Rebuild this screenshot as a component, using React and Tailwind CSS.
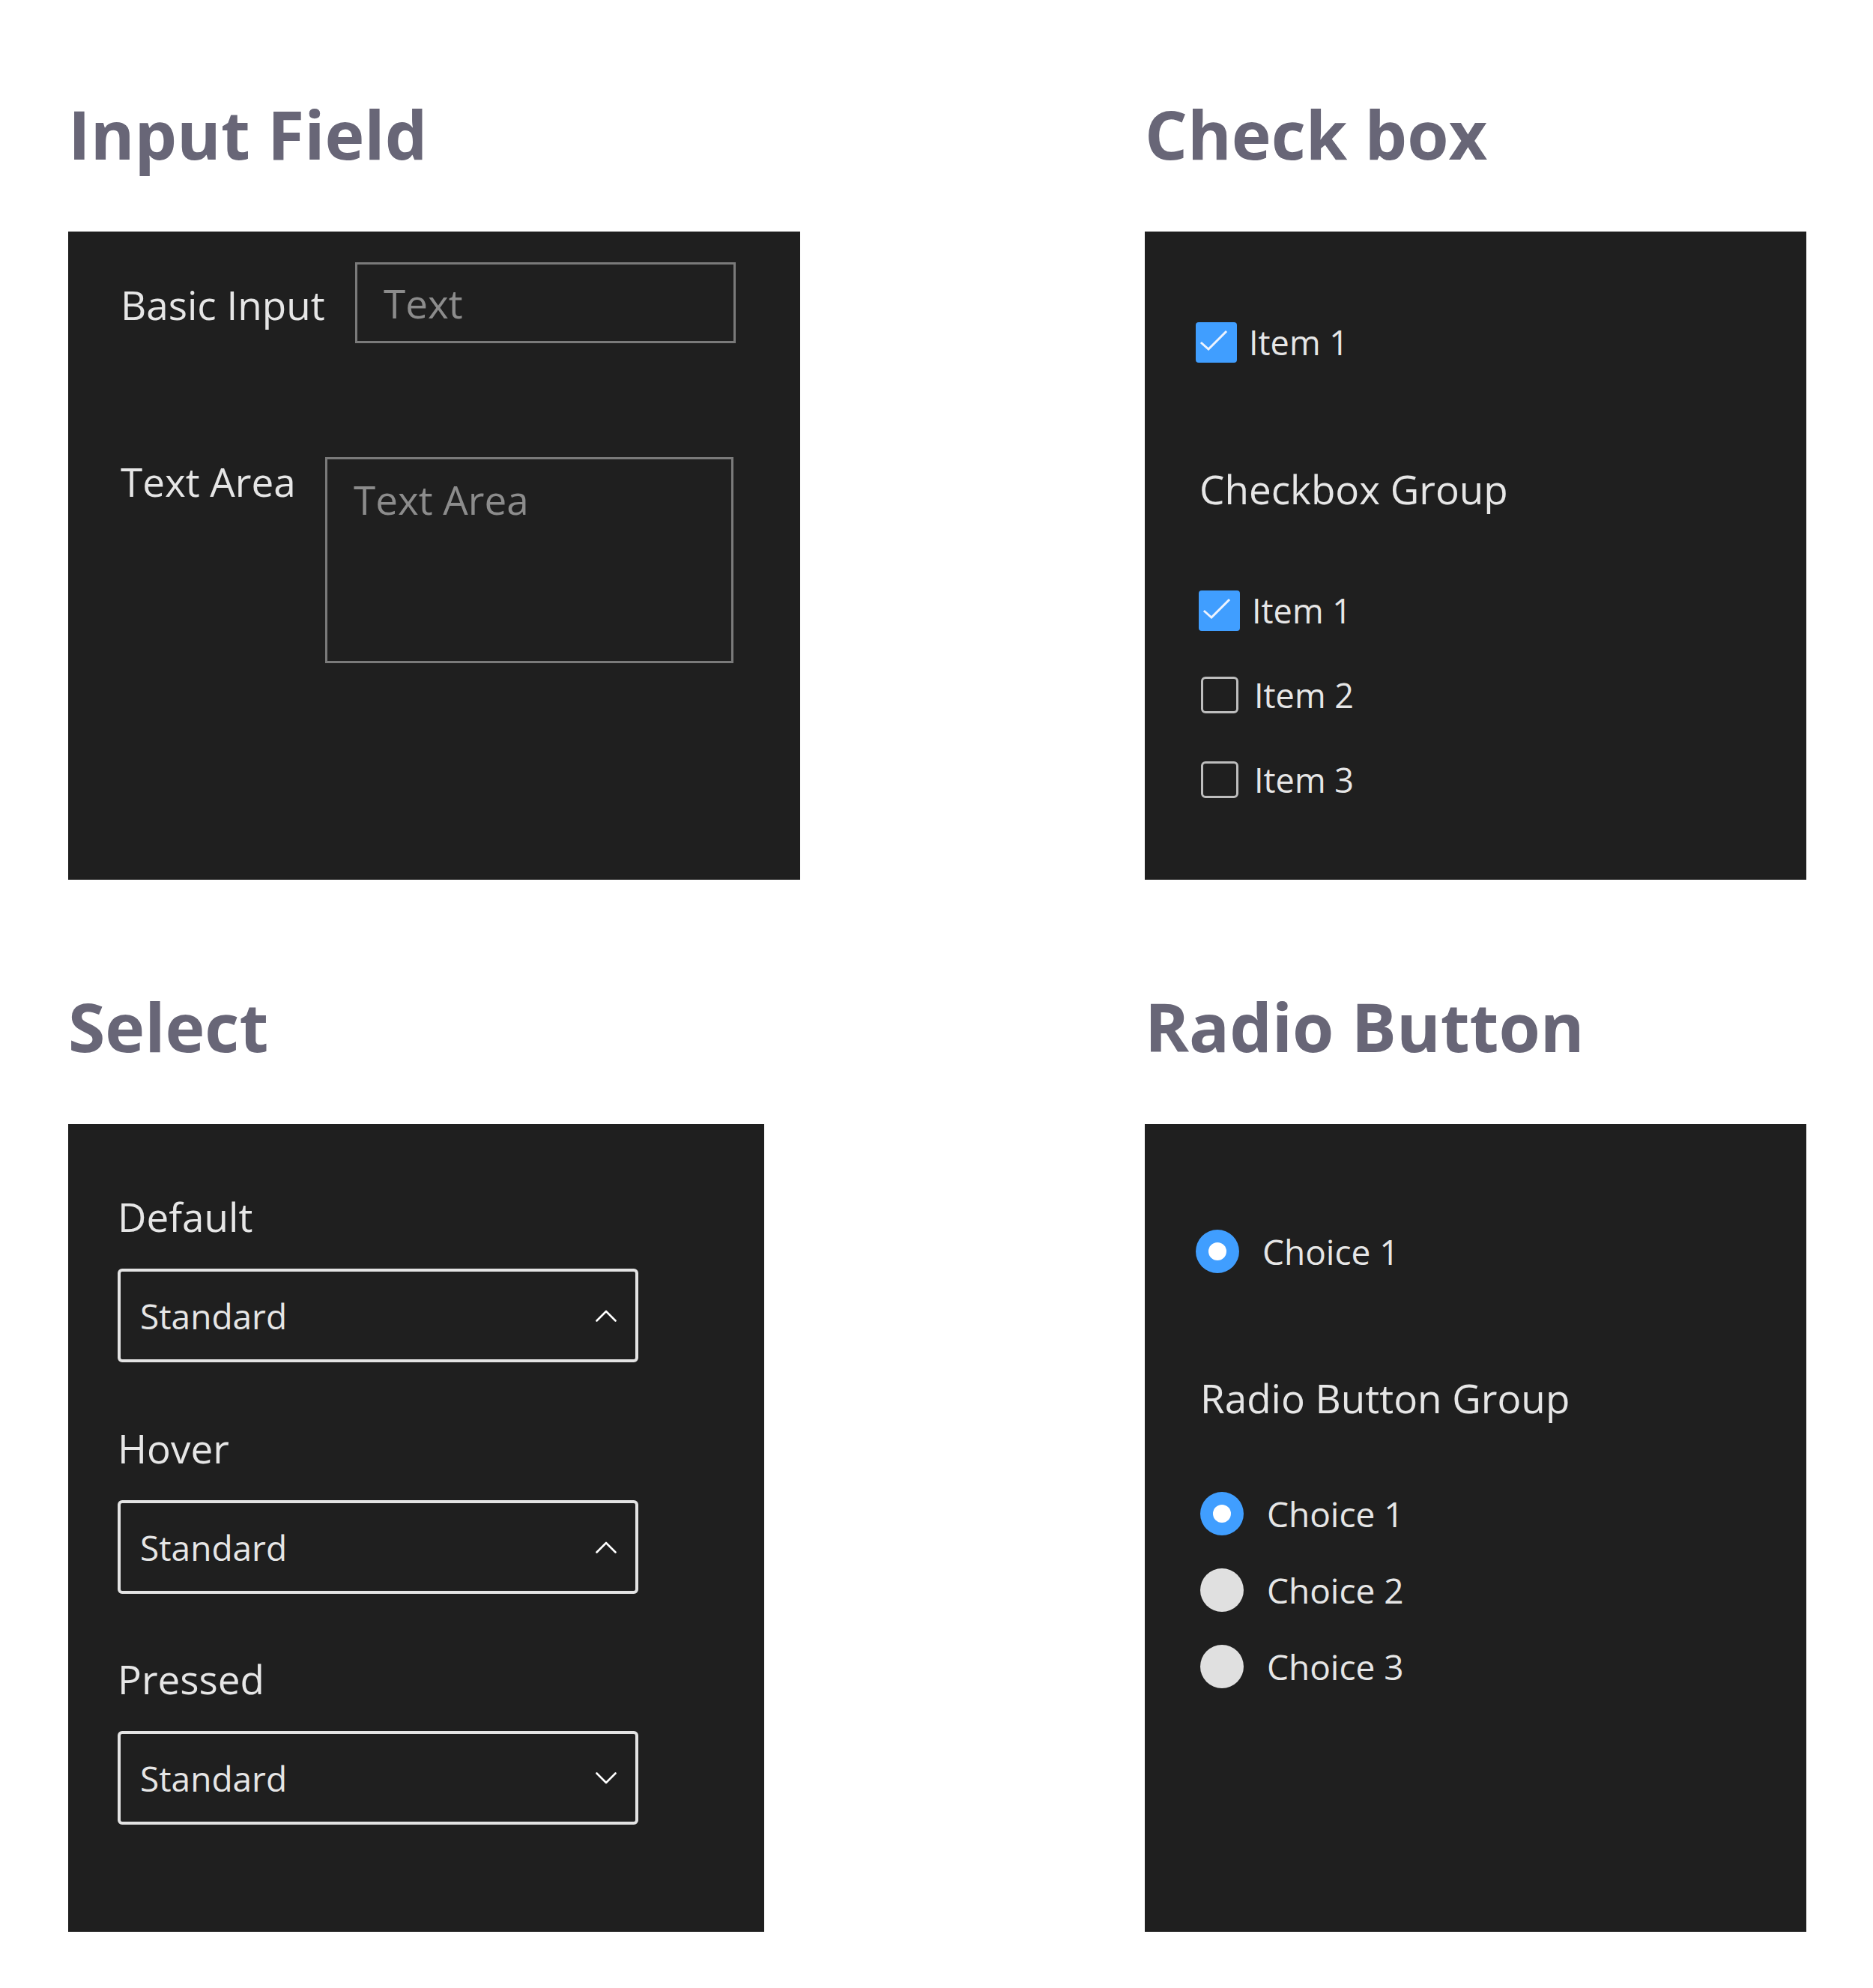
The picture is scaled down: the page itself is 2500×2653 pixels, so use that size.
import React from "react";

function Title({ children }) {
  return (
    <h2 className="text-[89.5px] leading-none font-bold text-[#686677] h-[90px] mb-[85px] whitespace-nowrap">
      {children}
    </h2>
  );
}

function CheckedBox() {
  return (
    <div className="w-[55px] h-[55px] flex items-center justify-center shrink-0">
      <div className="w-[55px] h-[54px] rounded-[4px] bg-[#409eff] flex items-center justify-center">
        <svg width="55" height="54" viewBox="0 0 55 54" fill="none">
          <polyline
            points="8,28 17,36 40,13"
            stroke="#eef4ff"
            strokeWidth="3"
            strokeLinecap="square"
            strokeLinejoin="miter"
          />
        </svg>
      </div>
    </div>
  );
}

function EmptyBox() {
  return (
    <div className="w-[55px] h-[55px] flex items-center justify-center shrink-0">
      <div className="w-[50px] h-[49px] rounded-[6px] border-[3px] border-[#bdbdbd]" />
    </div>
  );
}

function CheckRow({ checked, label, gap }) {
  return (
    <div className={`flex items-center ${gap}`}>
      {checked ? <CheckedBox /> : <EmptyBox />}
      <span className="text-[45px] leading-none text-[#e6e6e6] whitespace-nowrap">{label}</span>
    </div>
  );
}

function Radio({ checked, label }) {
  return (
    <div className="flex items-center gap-[31px]">
      {checked ? (
        <div className="w-[58px] h-[58px] rounded-full bg-[#409eff] flex items-center justify-center shrink-0">
          <div className="w-[24px] h-[24px] rounded-full bg-white" />
        </div>
      ) : (
        <div className="w-[58px] h-[58px] rounded-full bg-[#e0e0e0] shrink-0" />
      )}
      <span className="text-[46px] leading-none text-[#e6e6e6] whitespace-nowrap">{label}</span>
    </div>
  );
}

function SelectBox({ up }) {
  return (
    <div className="w-[695px] h-[125px] border-[4px] border-[#e3e3e3] rounded-[6px] flex items-center justify-between pl-[26px] pr-[25px]">
      <span className="text-[46px] leading-none text-[#e6e6e6]">Standard</span>
      <svg width="28" height="16" viewBox="0 0 28 16" fill="none">
        <polyline
          points={up ? "1.5,14.5 14,2 26.5,14.5" : "1.5,1.5 14,14 26.5,1.5"}
          stroke="#ffffff"
          strokeWidth="2.6"
          strokeLinecap="round"
          strokeLinejoin="round"
        />
      </svg>
    </div>
  );
}

export default function App() {
  return (
    <div className="w-[2500px] h-[2653px] bg-white font-['Open_Sans',sans-serif] pl-[91px] pt-[134px]">
      <div className="grid grid-cols-[1437px_883px] gap-y-[151px]">
        {/* Input Field */}
        <section>
          <Title>Input Field</Title>
          <div className="w-[977px] h-[865px] bg-[#1f1f1f] pt-[41px] pl-[70px]">
            <div className="flex items-start">
              <span className="w-[313px] mt-[30px] text-[53px] leading-none text-[#e6e6e6] whitespace-nowrap">
                Basic Input
              </span>
              <input
                readOnly
                placeholder="Text"
                className="w-[508px] h-[108px] border-[3px] border-[#7a7a7a] bg-transparent pl-[35px] text-[53px] text-[#8c8c8c] placeholder:text-[#8c8c8c] outline-none font-['Open_Sans',sans-serif]"
              />
            </div>
            <div className="flex items-start mt-[152px]">
              <span className="w-[273px] mt-[6px] text-[53px] leading-none text-[#e6e6e6] whitespace-nowrap">
                Text Area
              </span>
              <textarea
                readOnly
                placeholder="Text Area"
                className="w-[545px] h-[275px] border-[3px] border-[#7a7a7a] bg-transparent pl-[35px] pt-[27px] text-[53px] leading-none text-[#8c8c8c] placeholder:text-[#8c8c8c] outline-none resize-none font-['Open_Sans',sans-serif]"
              />
            </div>
          </div>
        </section>

        {/* Check box */}
        <section>
          <Title>Check box</Title>
          <div className="w-[883px] h-[865px] bg-[#1f1f1f] pt-[120px] pl-[68px] flex flex-col">
            <CheckRow checked label="Item 1" gap="gap-[16px]" />
            <div className="mt-[142px] ml-[5px] text-[53px] leading-none text-[#e6e6e6] whitespace-nowrap">
              Checkbox Group
            </div>
            <div className="mt-[108px] ml-[4px] flex flex-col gap-[58px]">
              <CheckRow checked label="Item 1" gap="gap-[16px]" />
              <CheckRow label="Item 2" gap="gap-[19px]" />
              <CheckRow label="Item 3" gap="gap-[19px]" />
            </div>
          </div>
        </section>

        {/* Select */}
        <section>
          <Title>Select</Title>
          <div className="w-[929px] h-[1078px] bg-[#1f1f1f] pt-[97px] pl-[66px] flex flex-col">
            <span className="text-[53px] leading-none text-[#e6e6e6]">Default</span>
            <div className="mt-[43px]">
              <SelectBox up />
            </div>
            <span className="mt-[88px] text-[53px] leading-none text-[#e6e6e6]">Hover</span>
            <div className="mt-[43px]">
              <SelectBox up />
            </div>
            <span className="mt-[87px] text-[53px] leading-none text-[#e6e6e6]">Pressed</span>
            <div className="mt-[43px]">
              <SelectBox />
            </div>
          </div>
        </section>

        {/* Radio Button */}
        <section>
          <Title>Radio Button</Title>
          <div className="w-[883px] h-[1078px] bg-[#1f1f1f] pt-[141px] pl-[68px] flex flex-col">
            <Radio checked label="Choice 1" />
            <div className="mt-[140px] ml-[6px] text-[53px] leading-none text-[#e6e6e6] whitespace-nowrap">
              Radio Button Group
            </div>
            <div className="mt-[99px] ml-[6px] flex flex-col gap-[44px]">
              <Radio checked label="Choice 1" />
              <Radio label="Choice 2" />
              <Radio label="Choice 3" />
            </div>
          </div>
        </section>
      </div>
    </div>
  );
}
